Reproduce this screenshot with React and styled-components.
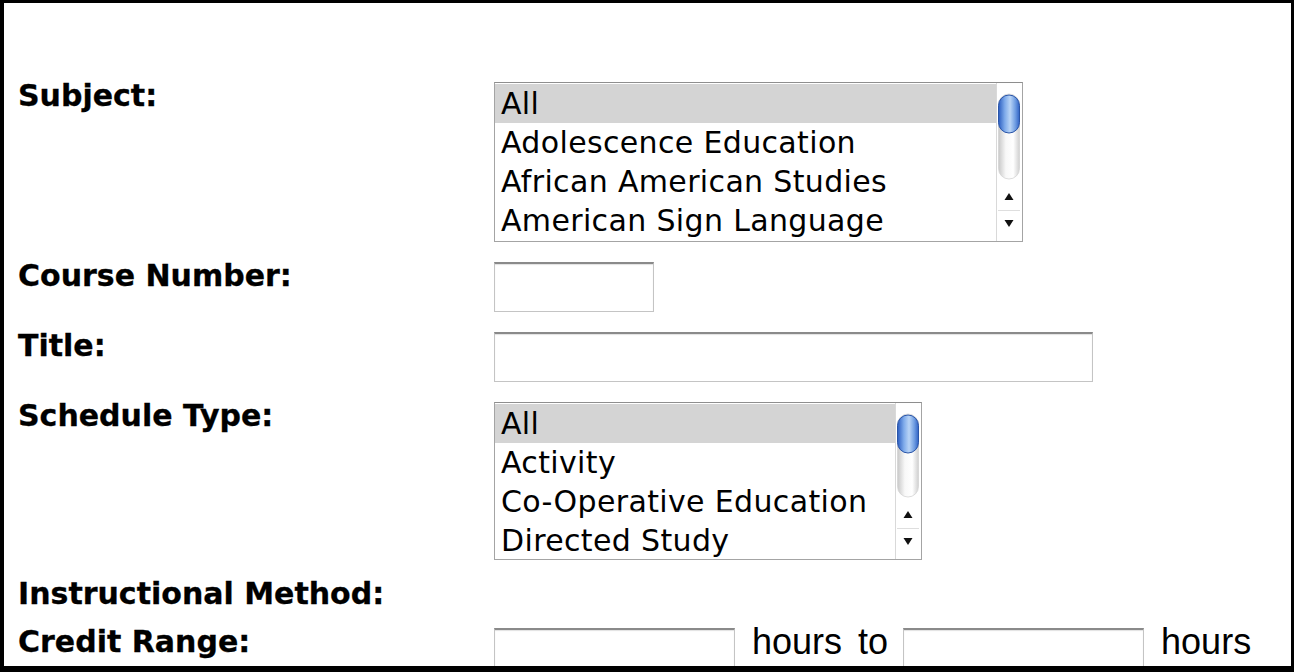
import React from "react";
import styled, { createGlobalStyle } from "styled-components";

const GlobalStyle = createGlobalStyle`
  html, body {
    margin: 0;
    padding: 0;
    background: #000;
  }
  body {
    font-family: "DejaVu Sans", Verdana, sans-serif;
    color: #000;
  }
`;

// white page seen through a black frame
const Frame = styled.div`
  margin: 3px 3px 0 4px;
  height: 663px;
  background: #fff;
  overflow: hidden;
  box-sizing: border-box;
  padding: 79px 0 0 14px;
`;

const FormGrid = styled.div`
  display: grid;
  grid-template-columns: 476px auto;
  row-gap: 20px;
  align-items: start;
`;

const Label = styled.div`
  font-family: "DejaVu Sans", Verdana, sans-serif;
  font-weight: bold;
  font-size: 30px;
  line-height: 28px;
  white-space: nowrap;
  -webkit-text-stroke: 0.3px #000;
`;

const Field = styled.div`
  display: flex;
  align-items: flex-start;
  gap: 15px;
  min-height: 28px;
`;

const ListBox = styled.div`
  display: flex;
  width: ${(p) => p.$width}px;
  height: ${(p) => p.$height}px;
  box-sizing: border-box;
  border: 1px solid #a4a4a4;
  border-top-color: #8e8e8e;
  background: #fff;
  overflow: hidden;
`;

const Options = styled.div`
  flex: 1;
  padding-top: 1px;
`;

const Option = styled.div`
  height: 39px;
  line-height: 39px;
  padding-left: 6px;
  font-family: "DejaVu Sans", Verdana, sans-serif;
  font-size: 30px;
  letter-spacing: 0.35px;
  white-space: nowrap;
  background: ${(p) => (p.$selected ? "#d4d4d4" : "transparent")};
`;

const TextBox = styled.input`
  appearance: none;
  width: ${(p) => p.$width}px;
  height: 50px;
  box-sizing: border-box;
  margin: 0;
  padding: 0 6px;
  border: 1px solid #c4c4c4;
  border-top: 2px solid #8a8a8a;
  box-shadow: inset 0 1px 1px rgba(0, 0, 0, 0.12);
  background: #fff;
  font-family: "DejaVu Sans", Verdana, sans-serif;
  font-size: 28px;
  outline: none;
`;

const Unit = styled.span`
  font-family: "Liberation Sans", Arial, sans-serif;
  font-size: 36px;
  line-height: 28px;
  word-spacing: 6px;
  white-space: nowrap;
  margin-left: 2px;
`;

const ScrollBar = ({ height }) => {
  const inner = height - 2;
  const up = inner - 45;
  const down = inner - 18;
  const sep = inner - 31;
  const trackEnd = inner - 62;
  return (
    <svg width="26" height={inner} viewBox={`0 0 26 ${inner}`} style={{ flex: "none", display: "block" }}>
      <defs>
        <linearGradient id="trk" x1="0" x2="1" y1="0" y2="0">
          <stop offset="0" stopColor="#c8c8c8" />
          <stop offset="0.35" stopColor="#f8f8f8" />
          <stop offset="0.7" stopColor="#ffffff" />
          <stop offset="1" stopColor="#d0d0d0" />
        </linearGradient>
        <linearGradient id="thumb" x1="0" x2="1" y1="0" y2="0">
          <stop offset="0" stopColor="#2a5cc0" />
          <stop offset="0.3" stopColor="#7eaaea" />
          <stop offset="0.55" stopColor="#b9d4f6" />
          <stop offset="0.8" stopColor="#6f9de2" />
          <stop offset="1" stopColor="#3062c4" />
        </linearGradient>
      </defs>
      <rect x="0" y="0" width="26" height={inner} fill="#fff" />
      <line x1="0.5" y1="0" x2="0.5" y2={inner} stroke="#d9d9d9" />
      <rect x="2.5" y="11" width="21" height={trackEnd - 11} rx="10.5" fill="url(#trk)" stroke="#d4d4d4" strokeWidth="0.8" />
      <rect x="2.5" y="12" width="21" height="38" rx="10.5" fill="url(#thumb)" stroke="#2a55a8" strokeWidth="1" />
      <polygon points={`8.5,${up + 4} 17.5,${up + 4} 13,${up - 3}`} fill="#111" />
      <line x1="2" y1={sep + 0.5} x2="24" y2={sep + 0.5} stroke="#dedede" />
      <polygon points={`8.5,${down - 3} 17.5,${down - 3} 13,${down + 4}`} fill="#111" />
    </svg>
  );
};

const MultiSelect = ({ options, width, height }) => (
  <ListBox role="listbox" $width={width} $height={height}>
    <Options>
      {options.map((opt, i) => (
        <Option key={opt} $selected={i === 0}>
          {opt}
        </Option>
      ))}
    </Options>
    <ScrollBar height={height} />
  </ListBox>
);

const subjects = ["All", "Adolescence Education", "African American Studies", "American Sign Language"];
const scheduleTypes = ["All", "Activity", "Co-Operative Education", "Directed Study"];

export default function App() {
  return (
    <>
      <GlobalStyle />
      <Frame>
        <FormGrid>
          <Label>Subject:</Label>
          <Field>
            <MultiSelect options={subjects} width={529} height={160} />
          </Field>

          <Label>Course Number:</Label>
          <Field>
            <TextBox $width={160} />
          </Field>

          <Label>Title:</Label>
          <Field>
            <TextBox $width={599} />
          </Field>

          <Label>Schedule Type:</Label>
          <Field>
            <MultiSelect options={scheduleTypes} width={428} height={158} />
          </Field>

          <Label>Instructional Method:</Label>
          <Field />

          <Label>Credit Range:</Label>
          <Field>
            <TextBox $width={241} />
            <Unit>hours to</Unit>
            <TextBox $width={241} />
            <Unit>hours</Unit>
          </Field>
        </FormGrid>
      </Frame>
    </>
  );
}
